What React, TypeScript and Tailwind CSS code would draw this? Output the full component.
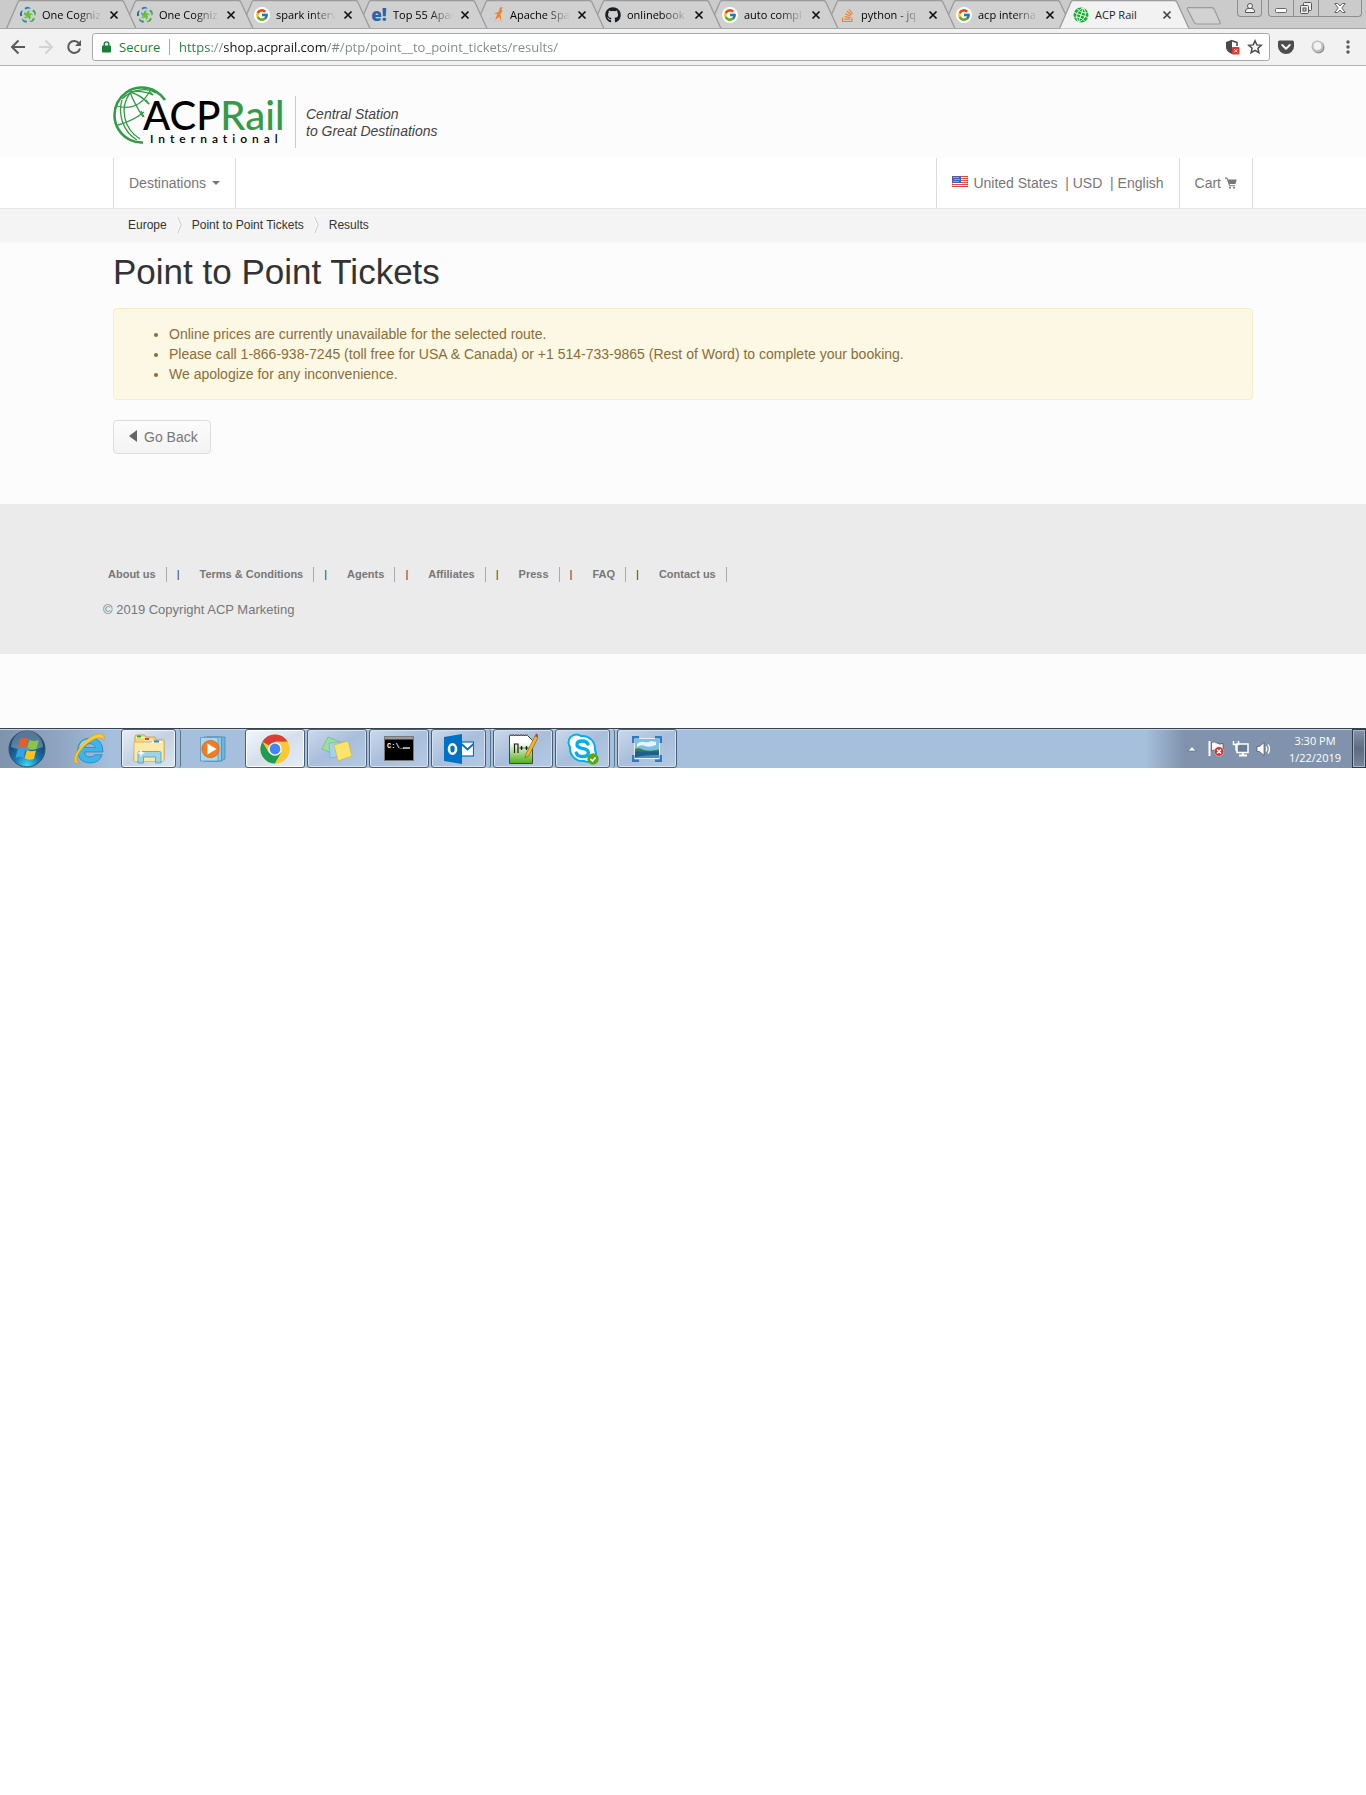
import type { ReactNode } from "react";
import { FcGoogle } from "react-icons/fc";
import { FaGithub, FaStackOverflow } from "react-icons/fa";

/* ---------- favicons ---------- */

function PinwheelIcon() {
  const arms = [
    { angle: 0, outer: "#1c86c4", inner: "#5bbf3f" },
    { angle: 72, outer: "#3aa655", inner: "#7ac943" },
    { angle: 144, outer: "#45b649", inner: "#5bbf3f" },
    { angle: 216, outer: "#2a9c8f", inner: "#7ac943" },
    { angle: 288, outer: "#1470a8", inner: "#5bbf3f" },
  ];
  return (
    <svg viewBox="0 0 18 18" className="size-[18px]" aria-hidden="true">
      <circle cx="9" cy="9" r="2.600" fill="#69c13f" />
      {arms.map((a) => (
        <g key={a.angle} transform={`rotate(${a.angle} 9 9)`}>
          <path d="M5.500 2Q9.500-.8 12 2.800 9 1.800 6.500 3.800Z" fill={a.outer} />
          <path d="M7.800 7.500Q7.400 4.600 11 4.300 9.600 5.600 10.200 8Z" fill={a.inner} />
        </g>
      ))}
    </svg>
  );
}

function GoogleIcon() {
  return (
    <span className="flex size-4 items-center justify-center rounded-full bg-white">
      <FcGoogle size={14} />
    </span>
  );
}

function EdurekaIcon() {
  return <span className="font-['Open_Sans',sans-serif] text-[17px] leading-6 font-extrabold text-[#2565ae]">e!</span>;
}

function SparkPersonIcon() {
  return (
    <svg viewBox="0 0 16 16" className="size-4" aria-hidden="true">
      <path d="M12 .5 14.500 0l-1 2.800 1 1.700-2 2.200 1 7.800-2.300-4.500L7 13l2.300-6L5.500 6.500 10.500 5Z" fill="#f58220" />
      <path d="M1 12c3-2 5 0 7-1M5 14.500c3-1.500 6 .5 9 0" stroke="#c8c4dd" fill="none" />
    </svg>
  );
}

function GreenGlobeIcon() {
  return (
    <svg viewBox="0 0 16 16" className="size-4" aria-hidden="true">
      <circle cx="8" cy="8" r="7.500" fill="#0fae2c" />
      <g transform="rotate(20 8 8)" stroke="#e8f8ea" strokeWidth=".9" fill="none">
        <path d="M8 .5v15M.5 8h15M2.500 3.500c3 2 8 2 11 0M2.500 12.500c3-2 8-2 11 0M8 .5c-5.500 4-5.500 11 0 15M8 .5c5.500 4 5.500 11 0 15" />
      </g>
    </svg>
  );
}

/* ---------- browser frame ---------- */

type Tab = { title: string; icon: ReactNode; active?: boolean };

const tabs: Tab[] = [
  { title: "One Cogniz", icon: <PinwheelIcon /> },
  { title: "One Cogniz", icon: <PinwheelIcon /> },
  { title: "spark interv", icon: <GoogleIcon /> },
  { title: "Top 55 Apac", icon: <EdurekaIcon /> },
  { title: "Apache Spa", icon: <SparkPersonIcon /> },
  { title: "onlinebook", icon: <FaGithub size={16} color="#1b1f23" /> },
  { title: "auto compl", icon: <GoogleIcon /> },
  { title: "python - jq", icon: <FaStackOverflow size={15} color="#f48024" /> },
  { title: "acp interna", icon: <GoogleIcon /> },
  { title: "ACP Rail", icon: <GreenGlobeIcon />, active: true },
];

function BrowserTab({ tab, index }: { tab: Tab; index: number }) {
  return (
    <div
      className="relative flex h-[29px] w-[117px] shrink-0 items-center pt-[1px] pl-[13px]"
      style={{ zIndex: tab.active ? 30 : 20 - index }}
    >
      <svg viewBox="0 0 132 29" className="absolute top-0 left-0 h-[29px] w-[132px]" aria-hidden="true">
        <path
          d="M.5 28.500 12 2Q12.500 .5 14 .5H115Q117 .5 117.800 2L130 28.500"
          fill={tab.active ? "#f2f2f2" : "#d0d0d0"}
          stroke="#9b9b9b"
          strokeWidth="1.300"
        />
        {!tab.active && <path d="M0 28.500H132" stroke="#a6a6a6" />}
      </svg>
      <span className="relative flex w-[18px] shrink-0 justify-center">{tab.icon}</span>
      <button
        role="tab"
        aria-selected={!!tab.active}
        className={
          tab.active
            ? "relative ml-[5px] w-[62px] overflow-hidden text-left text-[11px] leading-4 whitespace-nowrap text-[#222]"
            : "relative ml-[5px] w-[62px] overflow-hidden [mask-image:linear-gradient(to_right,#000_35px,transparent_60px)] text-left text-[11px] leading-4 whitespace-nowrap text-black"
        }
      >
        {tab.title}
      </button>
      <button aria-label={`Close ${tab.title}`} className="relative ml-[2px] flex size-4 shrink-0 items-center justify-center">
        <svg viewBox="0 0 10 10" className="size-[10px]" aria-hidden="true">
          <path d="m1.500 1.500 7 7m0-7-7 7" stroke={tab.active ? "#444" : "#111"} strokeWidth="1.700" />
        </svg>
      </button>
    </div>
  );
}

function WindowControls() {
  return (
    <div className="ml-auto flex gap-[6px] pr-[4px]">
      <button aria-label="Profile" className="flex h-[17px] w-[25px] items-center justify-center rounded-b-[4px] border border-t-0 border-[#8e8e8e]">
        <svg viewBox="0 0 12 12" className="size-3" fill="#f2f2f2" stroke="#555" aria-hidden="true">
          <path d="M1.500 10.500V9q0-2 2.500-2.500h4Q10.500 7 10.500 9v1.500Z" />
          <circle cx="6" cy="4" r="2.500" />
        </svg>
      </button>
      <div className="flex h-[17px] rounded-b-[4px] border border-t-0 border-[#8e8e8e]">
        <button aria-label="Minimize" className="flex w-[25px] items-center justify-center border-r border-[#8e8e8e]">
          <svg viewBox="0 0 12 12" className="size-3" aria-hidden="true">
            <rect x=".5" y="6.500" width="11" height="4" rx="1" fill="#fff" stroke="#666" />
          </svg>
        </button>
        <button aria-label="Restore" className="flex w-[25px] items-center justify-center border-r border-[#8e8e8e]">
          <svg viewBox="0 0 14 14" className="size-[14px]" fill="#eee" stroke="#555" aria-hidden="true">
            <rect x="4.500" y="1.500" width="8" height="8" rx="1" />
            <rect x="1.500" y="4.500" width="8" height="8" rx="1" />
            <rect x="4" y="7" width="3" height="3" fill="#ccc" />
          </svg>
        </button>
        <button aria-label="Close window" className="flex w-[42px] items-center justify-center">
          <svg viewBox="0 0 12 12" className="size-3" aria-hidden="true">
            <path d="M.8 1.500h3L6 4l2.200-2.500h3L7.800 6l3.400 4.500h-3L6 8l-2.200 2.500h-3L4.200 6Z" fill="#fff" stroke="#666" />
          </svg>
        </button>
      </div>
    </div>
  );
}

function Toolbar() {
  return (
    <div className="flex h-[37px] items-center border-b border-[#b5b5b5] bg-[#f2f2f2] pr-[10px] pl-[10px]">
      <button aria-label="Back" className="flex size-4 items-center justify-center">
        <svg viewBox="0 0 16 16" className="size-4" fill="none" stroke="#5a5a5a" strokeWidth="2" aria-hidden="true">
          <path d="M15 8H2.500M8.500 1.500 2 8l6.500 6.500" />
        </svg>
      </button>
      <button aria-label="Forward" className="ml-[12px] flex size-4 items-center justify-center">
        <svg viewBox="0 0 16 16" className="size-4" fill="none" stroke="#d3d3d3" strokeWidth="2" aria-hidden="true">
          <path d="M1 8h12.500M7.500 1.500 14 8l-6.500 6.500" />
        </svg>
      </button>
      <button aria-label="Reload" className="ml-[12px] flex size-4 items-center justify-center">
        <svg viewBox="0 0 16 16" className="size-4" fill="none" stroke="#5a5a5a" strokeWidth="2" aria-hidden="true">
          <path d="M13 4.300A6 6 0 1 0 14 9.500" />
          <path d="M15 1v6H9Z" fill="#5a5a5a" stroke="none" />
        </svg>
      </button>
      <div className="ml-[10px] flex h-[28px] min-w-0 flex-1 items-center rounded-[3px] border border-[#a9a9a9] bg-white pr-[6px] pl-[9px]">
        <svg viewBox="0 0 9 12" className="h-3 w-[9px]" aria-hidden="true">
          <rect y="4.500" width="9" height="7" rx=".8" fill="#188038" />
          <path d="M2.200 5V3.200a2.300 2.300 0 0 1 4.600 0V5" fill="none" stroke="#188038" strokeWidth="1.400" />
        </svg>
        <span className="w-[58px] pl-[8px] text-[13px] leading-5 text-[#188038]">Secure</span>
        <span className="mr-[9px] h-4 w-px bg-[#a9a9a9]" />
        <input
          aria-label="Address"
          defaultValue="https://shop.acprail.com/#/ptp/point__to_point_tickets/results/"
          className="min-w-0 flex-1 bg-[linear-gradient(to_right,#188038_0_32px,#80868b_32px_45px,#111_45px_148px,#80868b_148px)] bg-clip-text text-[13px] leading-5 text-transparent outline-none"
        />
        <button aria-label="Blocked content" className="flex size-4 items-center justify-center">
          <svg viewBox="0 0 16 16" className="size-4" aria-hidden="true">
            <path d="M8 .8 2 3v5c0 3.500 3 6 6 7Z" fill="#4a4a4a" />
            <path d="M8 1.800 13 3.600V7" fill="none" stroke="#4a4a4a" strokeWidth="1.600" />
            <rect x="8" y="8" width="7.500" height="7.500" rx="1" fill="#d93a2f" />
            <path d="m10.300 10.300 3 3m0-3-3 3" stroke="#fff" />
          </svg>
        </button>
        <button aria-label="Bookmark" className="ml-[7px] flex size-4 items-center justify-center">
          <svg viewBox="0 0 16 16" className="size-4" fill="none" stroke="#4a4a4a" strokeWidth="1.500" aria-hidden="true">
            <path d="m8 1.800 1.800 4.100 4.500.4-3.400 3 1 4.400L8 11.400l-3.900 2.300 1-4.400-3.400-3 4.500-.4Z" />
          </svg>
        </button>
      </div>
      <button aria-label="Save to Pocket" className="ml-[8px] flex size-4 items-center justify-center">
        <svg viewBox="0 0 16 16" className="size-4" aria-hidden="true">
          <path d="M1.500 1.500h13Q16 1.500 16 3v4.500a8 7.500 0 0 1-16 0V3Q0 1.500 1.500 1.500Z" fill="#4d4d4d" />
          <path d="m4.200 6 3.800 3.700L11.800 6" fill="none" stroke="#f4f4f4" strokeWidth="2" strokeLinecap="round" strokeLinejoin="round" />
        </svg>
      </button>
      <button aria-label="Extension" className="ml-[16px] flex size-4 items-center justify-center">
        <svg viewBox="0 0 16 16" className="size-4" aria-hidden="true">
          <circle cx="8.500" cy="8.500" r="6" fill="#8e8e8e" />
          <circle cx="7.500" cy="7.500" r="6" fill="#bdbdbd" />
          <circle cx="7.500" cy="7" r="4" fill="#f3f3f3" />
        </svg>
      </button>
      <button aria-label="Menu" className="ml-[14px] flex size-4 items-center justify-center">
        <svg viewBox="0 0 16 16" className="size-4" fill="#5a5a5a" aria-hidden="true">
          <circle cx="8" cy="3" r="1.700" />
          <circle cx="8" cy="8" r="1.700" />
          <circle cx="8" cy="13" r="1.700" />
        </svg>
      </button>
    </div>
  );
}

function BrowserFrame() {
  return (
    <div className="font-['Open_Sans','Noto_Sans',sans-serif]">
      <div className="flex h-[29px] items-start border-b border-[#a6a6a6] bg-[#cbcbcb] pl-[6px]">
        <div role="tablist" className="flex">
          {tabs.map((tab, i) => (
            <BrowserTab key={i} tab={tab} index={i} />
          ))}
        </div>
        <button aria-label="New tab" className="mt-[7px] ml-[10px]">
          <svg viewBox="0 0 36 18" className="h-[18px] w-9" aria-hidden="true">
            <path d="M2.500 .7h23q2 0 3 2l5.500 12.500q.7 1.800-1 1.800H11q-2 0-3-2L1.500 2.500Q.8 .7 2.500 .7Z" fill="#d2d2d2" stroke="#9b9b9b" strokeWidth="1.200" />
          </svg>
        </button>
        <WindowControls />
      </div>
      <Toolbar />
    </div>
  );
}

/* ---------- site ---------- */

function Logo() {
  return (
    <svg viewBox="0 0 172 60" className="h-[60px] w-[172px] overflow-visible" role="img" aria-label="ACPRail International">
      <g fill="none" stroke="#349b47">
        <path d="M52 14A27.500 27.500 0 1 0 30 56.500" strokeWidth="2.600" />
        <g strokeWidth="1.300">
          <path d="M9 13Q16 6 25 4.500Q35 2 43 7" />
          <path d="M9 14C5 27 9 45 24 54" />
          <path d="M17 7C6 22 11 43 27 53" />
          <path d="M17 6Q21 17 30 31" />
          <path d="M17 6Q28 9 36 18" />
          <path d="M17 6Q30 4 40 9" />
          <path d="M4 20Q25 26 37 5" />
          <path d="M5 39Q20 35 31 26" />
          <path d="M28 25l3 6M33 14l3 4M37 6l3 3" />
        </g>
      </g>
      <text x="30" y="44" className="font-['Lato',sans-serif] text-[40px] font-medium" fill="#000">
        ACP<tspan fill="#349b47">Rail</tspan>
      </text>
      <text x="37" y="57" className="font-['Lato',sans-serif] text-[12px] font-semibold tracking-[5px]" fill="#000">
        International
      </text>
    </svg>
  );
}

function FlagIcon() {
  return (
    <svg viewBox="0 0 16 11" className="mb-1 h-[11px] w-4" aria-hidden="true">
      <rect width="16" height="11" fill="#fff" />
      <path d="M0 .5h16M0 2.500h16M0 4.500h16M0 6.500h16M0 8.500h16M0 10.500h16" stroke="#ee4a3c" />
      <rect width="9" height="7" fill="#2f62d0" />
      <path d="M1.500 1.500h6M2.500 3.500h6M1.500 5.500h6" stroke="#dfe7fa" strokeDasharray="1 1" />
      <rect x=".5" y=".5" width="15" height="10" fill="none" stroke="#b0453f" strokeOpacity=".4" />
    </svg>
  );
}

function CartIcon() {
  return (
    <svg viewBox="0 0 12 12" className="size-3" fill="#777" aria-hidden="true">
      <path d="M0 .5h2.300L3 2.500h8.700L10.500 7H4.500l.4 1.300H10v1H4.200L1.700 1.700H0Z" />
      <circle cx="5" cy="10.700" r="1" />
      <circle cx="9" cy="10.700" r="1" />
    </svg>
  );
}

function SiteHeader() {
  return (
    <header>
      <div className="mx-auto flex h-[92px] max-w-[1140px] pt-[20px]">
        <a href="#home" className="block">
          <Logo />
        </a>
        <p className="mt-[10px] ml-[10px] h-[52px] border-l border-[#ccc] pt-[10px] pl-[10px] text-[14px] leading-[17px] text-[#444] italic">
          Central Station
          <br />
          to Great Destinations
        </p>
      </div>
      <nav aria-label="Main" className="border-b border-[#e5e5e5] bg-white text-[14px] leading-5 text-[#777]">
        <div className="mx-auto flex h-[50px] max-w-[1140px] justify-between">
          <button className="flex items-center border-x border-[#ddd] px-[15px]">
            Destinations
            <span className="ml-[6px] border-x-4 border-t-4 border-x-transparent border-t-[#777]" />
          </button>
          <div className="flex">
            <button className="flex items-center border-l border-[#ddd] px-[15px] whitespace-pre">
              <FlagIcon />
              <span className="ml-[5px]">{"United States\u00a0 | USD\u00a0 | English"}</span>
            </button>
            <a href="#cart" className="flex items-center gap-[4px] border-x border-[#ddd] px-[15px]">
              Cart
              <CartIcon />
            </a>
          </div>
        </div>
      </nav>
    </header>
  );
}

function Breadcrumb() {
  const crumbs = ["Europe", "Point to Point Tickets", "Results"];
  return (
    <nav aria-label="Breadcrumb" className="bg-[#f4f4f4]">
      <ol className="mx-auto flex h-[33px] max-w-[1140px] items-center pb-[2px] pl-[15px] text-[12px] leading-5 text-[#333]">
        {crumbs.map((c, i) => (
          <li key={c} className="flex items-center">
            <a href={`#crumb-${i}`}>{c}</a>
            {i < crumbs.length - 1 && (
              <svg viewBox="0 0 6 18" className="mr-[10px] ml-[9px] h-[18px] w-[6px]" fill="none" aria-hidden="true">
                <path d="M1.500 1 5 9 1.500 17" stroke="#c4c4c4" />
                <path d="M.5 1 4 9 .5 17" stroke="#fff" />
              </svg>
            )}
          </li>
        ))}
      </ol>
    </nav>
  );
}

function Results() {
  return (
    <main className="mx-auto max-w-[1140px] pt-[10px] pb-[50px]">
      <h1 className="text-[35px] leading-10 text-[#333]">Point to Point Tickets</h1>
      <div role="alert" className="mt-4 rounded-[4px] border border-[#faebcc] bg-[#fcf8e3] p-[15px] text-[14px] leading-5 text-[#8a6d3b]">
        <ul className="list-disc pl-10">
          <li>Online prices are currently unavailable for the selected route.</li>
          <li>Please call 1-866-938-7245 (toll free for USA &amp; Canada) or +1 514-733-9865 (Rest of Word) to complete your booking.</li>
          <li>We apologize for any inconvenience.</li>
        </ul>
      </div>
      <button className="mt-5 flex items-center rounded-[4px] border border-[#ddd] bg-linear-to-b from-[#fcfcfc] to-[#f3f3f3] py-[6px] pr-[12px] pl-[15px] text-[14px] leading-5 text-[#777]">
        <svg viewBox="0 0 8 12" className="mr-[7px] mb-[2px] h-3 w-2" fill="#666" aria-hidden="true">
          <path d="M8 0v12L0 6Z" />
        </svg>
        Go Back
      </button>
    </main>
  );
}

const footerLinks = ["About us", "Terms & Conditions", "Agents", "Affiliates", "Press", "FAQ", "Contact us"];

function Footer() {
  return (
    <footer className="h-[150px] bg-[#ebebeb] pt-[63px] text-[#777]">
      <div className="mx-auto max-w-[1160px]">
        <ul className="flex items-center pl-[5px] text-[11px] leading-[15px] font-bold">
          {footerLinks.map((label, i) => (
            <li key={label} className="flex">
              <a href={`#footer-${i}`} className="border-r border-[#aaa] pr-[10px]">
                {label}
              </a>
              {i < footerLinks.length - 1 && <span className="mr-[20px] ml-[10px] font-normal text-[#333]">|</span>}
            </li>
          ))}
        </ul>
        <p className="mt-[18px] text-[13px] leading-5">© 2019 Copyright ACP Marketing</p>
      </div>
    </footer>
  );
}

/* ---------- taskbar ---------- */

function StartOrb() {
  return (
    <svg viewBox="0 0 38 38" className="size-[38px]" aria-hidden="true">
      <defs>
        <radialGradient id="orb" cx=".5" cy=".95" r=".8">
          <stop offset="0" stopColor="#3fd8f5" />
          <stop offset=".45" stopColor="#1673ab" />
          <stop offset="1" stopColor="#123c63" />
        </radialGradient>
      </defs>
      <circle cx="19" cy="19" r="18" fill="url(#orb)" stroke="#32506f" />
      <path d="M3 17A16 16 0 0 1 35 17Q19 24 3 17Z" fill="#b9d3e6" fillOpacity=".4" />
      <path d="M12 9.500q4-2.600 8-.6l-2 8.600q-4-2-8 .3Z" fill="#ef5b28" />
      <path d="M21.300 9.800q4 2.300 9.500.3l-2.300 8.600q-5.200 1.700-9.200-.6Z" fill="#8cc63e" />
      <path d="M9.500 19.700q4-2.300 8-.3L15.500 27.700q-4-2-8 .6Z" fill="#36a3e0" />
      <path d="M18.800 20q4 2.300 9.200.6l-2.100 8.300q-4.900 1.700-9.200-.3Z" fill="#fcc21b" />
    </svg>
  );
}

function ExplorerEIcon() {
  return (
    <svg viewBox="0 0 32 32" className="size-8" aria-hidden="true">
      <path
        d="M30 19H11.500q.5 5 5.500 5 3.500 0 4.800-2.300h7.400Q26.500 30 17 30 5 29.500 4.500 17.500 5 5.500 17.500 5 30 5.500 30 19ZM11.700 14.500H22.300Q21.500 10.600 17 10.500q-4.500.1-5.300 4Z"
        fill="#3cb6ea"
        stroke="#1b7fbd"
        strokeWidth=".7"
      />
      <path d="M7 14.500Q9 8 16.500 7" stroke="#b5e8fb" strokeWidth="1.800" fill="none" />
      <path d="M7 30.500Q-1.500 31.500 2.500 21.500 9 8 21 2 32.500-2 31 7.500 29 2.500 19.500 7 8 13.500 4.300 23.500 2 29 7 30.500Z" fill="#fbcb2f" stroke="#d79a10" strokeWidth=".6" />
    </svg>
  );
}

function FolderIcon() {
  return (
    <svg viewBox="0 0 34 32" className="h-8 w-[34px]" aria-hidden="true">
      <path d="M3 3.500q0-1.500 1.500-1.500h8l1.500 2h9l1.500 3h6q1.500 0 1.500 1.500V27H2Z" fill="#f5d77c" stroke="#c49a37" strokeWidth=".8" />
      <path d="M2 9h17l1.500-2h11.500v20q0 1.500-1.500 1.500h-27Q2 28.500 2 27Z" fill="#fae9a8" stroke="#d1ab4e" strokeWidth=".7" />
      <path d="M4 4.500h8M12 7h9M20 9.500h9" stroke="#fff" />
      <rect x="5" y="2.500" width="4" height="2" fill="#20b04a" />
      <rect x="13" y="5" width="4" height="2" fill="#d9452b" />
      <rect x="22" y="7.500" width="5" height="2" fill="#2b85d0" />
      <path d="M6 30V20q0-1.500 1.500-1.500h20q1.500 0 1.500 1.500v10h-5.500v-6h-12v6Z" fill="#8fd0ea" fillOpacity=".85" stroke="#4d9dc2" strokeWidth=".8" />
      <path d="m9 16 1 3 3 1-3 1-1 3-1-3-3-1 3-1Z" fill="#fff" />
    </svg>
  );
}

function MediaIcon() {
  return (
    <svg viewBox="0 0 28 28" className="size-7" aria-hidden="true">
      <path d="M8 2h18v22l-4 2H8Z" fill="#6bb7dc" stroke="#3f86ad" strokeWidth=".7" />
      <path d="M5 2h17.500v24H5Z" fill="#8ecbe8" stroke="#3f86ad" strokeWidth=".7" />
      <path d="M1.500 2.500H19v23.500H1.500Z" fill="#a8d8ef" stroke="#4a91b8" strokeWidth=".7" />
      <circle cx="11.500" cy="14" r="8.700" fill="#f47c20" stroke="#cc5a0c" strokeWidth=".6" />
      <path d="m8.500 8.500 9 5.500-9 5.500Z" fill="#fff" />
    </svg>
  );
}

function ChromeIcon() {
  return (
    <svg viewBox="0 0 30 30" className="size-[30px]" aria-hidden="true">
      <circle cx="15" cy="15" r="14.500" fill="#fcc934" />
      <path d="M15 15 2.440 7.750A14.500 14.500 0 0 1 27.560 7.750H15Z" fill="#d93f34" />
      <path d="M2.440 7.750A14.500 14.500 0 0 0 15 29.500L21.280 18.620 15 15 8.720 18.620Z" fill="#1e9c53" />
      <path d="M15 7.750H27.560A14.500 14.500 0 0 1 15 29.500L21.280 18.620Z" fill="#fcc934" />
      <circle cx="15" cy="15" r="6.800" fill="#fff" />
      <circle cx="15" cy="15" r="5.400" fill="#4285f4" />
    </svg>
  );
}

function StickyIcon() {
  return (
    <svg viewBox="0 0 32 28" className="h-7 w-8" strokeWidth=".6" aria-hidden="true">
      <path d="M7 2 19 7 13 19 1 14Z" fill="#9adf9b" stroke="#67b569" />
      <path d="m8 8 14-1 1 14-14 2Z" fill="#9fd2f3" stroke="#6ba7cf" />
      <path d="m13 10 14-4 4 15-14 5Z" fill="#fbe36c" stroke="#cfae31" />
    </svg>
  );
}

function TerminalIcon() {
  return (
    <svg viewBox="0 0 30 25" className="h-[25px] w-[30px]" aria-hidden="true">
      <rect x=".5" y=".5" width="29" height="24" fill="#000" stroke="#777" />
      <rect x="1" y="1" width="28" height="2.500" fill="#9a9a9a" />
      <text x="3" y="12" className="font-['Liberation_Mono',monospace] text-[7px] font-bold" fill="#fff">
        C:\_
      </text>
      <path d="M19 12h7" stroke="#fff" strokeWidth="1.300" />
    </svg>
  );
}

function OutlookIcon() {
  return (
    <svg viewBox="0 0 30 30" className="size-[30px]" aria-hidden="true">
      <rect x="17" y="8" width="12.500" height="14" fill="#fff" stroke="#0072c6" strokeWidth="1.200" />
      <path d="m17.500 10 6 5.500 6-5.500" fill="none" stroke="#0072c6" strokeWidth="1.800" />
      <path d="M0 3 18 0v30L0 27Z" fill="#0072c6" />
      <ellipse cx="8.500" cy="15" rx="3.500" ry="4.700" fill="none" stroke="#fff" strokeWidth="2.600" />
    </svg>
  );
}

function NotepadIcon() {
  return (
    <svg viewBox="0 0 30 32" className="h-8 w-[30px]" aria-hidden="true">
      <defs>
        <linearGradient id="note" x2="0" y2="1">
          <stop offset=".25" stopColor="#fff" />
          <stop offset="1" stopColor="#4fae11" />
        </linearGradient>
      </defs>
      <path d="M1.500 2.500h18l5 5v23h-23Z" fill="url(#note)" stroke="#3d4d33" />
      <path d="M2 2h18" stroke="#777" strokeWidth="2" strokeDasharray="1.500 1" />
      <path d="M6.500 20v-9h3.500v9M11.500 15h4M13.500 13v4M16.500 15h4M18.500 13v4" fill="none" stroke="#1c1c1c" strokeWidth="1.200" />
      <path d="m17 25 1-4L27 3l3 1.500L21 22.500Z" fill="#f3b62f" stroke="#8f6012" strokeWidth=".7" />
      <path d="m27 3 1-2.500 2 1v3Z" fill="#b64653" />
    </svg>
  );
}

function SkypeIcon() {
  return (
    <svg viewBox="0 0 32 32" className="size-8" aria-hidden="true">
      <circle cx="9.500" cy="9.500" r="9" fill="#00aff0" />
      <circle cx="21" cy="21" r="9" fill="#00aff0" />
      <circle cx="15.500" cy="15.500" r="13.500" fill="#00aff0" />
      <circle cx="9.500" cy="9.500" r="7" fill="#fff" />
      <circle cx="21" cy="21" r="7" fill="#fff" />
      <circle cx="15.500" cy="15.500" r="11.500" fill="#fff" />
      <path d="M21 11q-1.500-3-5.500-3-5.500 0-5.500 3.500 0 3 5.300 3.900 6 .8 6 4.300 0 3.800-6 3.800-4.700 0-6-3.500" fill="none" stroke="#00aff0" strokeWidth="3.400" strokeLinecap="round" />
      <circle cx="26" cy="26" r="5.700" fill="#5aa812" />
      <path d="m23.500 26 2 2 3-3.500" fill="none" stroke="#fff" strokeWidth="1.700" />
    </svg>
  );
}

function PhotoIcon() {
  return (
    <svg viewBox="0 0 30 26" className="h-[26px] w-[30px]" aria-hidden="true">
      <rect x="2.500" y="2.500" width="25" height="20" fill="#7cc0ea" stroke="#e8eef2" />
      <path d="M5 8q3-3 7-2t7-1l5 1v3q-7 3-11 1T5 11Z" fill="#e7f6fd" />
      <path d="M3 13q4-2 9 1 7 1.500 15-.5v3H3Z" fill="#3d7f47" />
      <path d="M3 15.500h24V22H3Z" fill="#1f5f8b" />
      <path d="M3 21.500q8-3 24-2.500v3H3Z" fill="#4d8fb5" />
      <path d="M1.200 7V1.200H7M23 1.200h5.800V7M28.800 19v5.800H23M7 24.800H1.200V19" fill="none" stroke="#2b7cc0" strokeWidth="2.400" />
    </svg>
  );
}

type Task = { name: string; icon: ReactNode; state: "idle" | "open" | "stack" | "focus" };

const tasks: Task[] = [
  { name: "Internet Explorer", icon: <ExplorerEIcon />, state: "idle" },
  { name: "File Explorer", icon: <FolderIcon />, state: "stack" },
  { name: "Media Player", icon: <MediaIcon />, state: "idle" },
  { name: "Chrome", icon: <ChromeIcon />, state: "focus" },
  { name: "Sticky Notes", icon: <StickyIcon />, state: "open" },
  { name: "Command Prompt", icon: <TerminalIcon />, state: "open" },
  { name: "Outlook", icon: <OutlookIcon />, state: "stack" },
  { name: "Notepad++", icon: <NotepadIcon />, state: "open" },
  { name: "Skype", icon: <SkypeIcon />, state: "stack" },
  { name: "Photo Viewer", icon: <PhotoIcon />, state: "open" },
];

function TaskButton({ task }: { task: Task }) {
  if (task.state === "idle") {
    return (
      <button aria-label={task.name} className="flex h-[39px] w-[60px] items-center justify-center">
        {task.icon}
      </button>
    );
  }
  if (task.state === "stack") {
    const first = task.name === "File Explorer";
    return (
      <div className="flex h-[39px] w-[60px] rounded-[3px] border-r border-[#5f7690]">
        <button
          aria-label={task.name}
          className={
            first
              ? "flex w-[55px] items-center justify-center rounded-[3px] border border-[#4b5e75] bg-linear-to-br from-[#e8eef6] via-[#c3d1e4] to-[#dbe6f2] shadow-[inset_0_0_0_1px_#eef4fa]"
              : "flex w-[55px] items-center justify-center rounded-[3px] border border-[#4b5e75] bg-linear-to-br from-[#cbd9ea] via-[#a8bedb] to-[#b5cae3] shadow-[inset_0_0_0_1px_#d5e2f0]"
          }
        >
          {task.icon}
        </button>
      </div>
    );
  }
  return (
    <button
      aria-label={task.name}
      className={
        task.state === "focus"
          ? "flex h-[39px] w-[60px] items-center justify-center rounded-[3px] border border-[#4b5e75] bg-linear-to-br from-[#f4f7fb] via-[#d5dfec] to-[#e6edf5] shadow-[inset_0_0_0_1px_#ffffff]"
          : "flex h-[39px] w-[60px] items-center justify-center rounded-[3px] border border-[#4b5e75] bg-linear-to-br from-[#cbd9ea] via-[#a8bedb] to-[#b5cae3] shadow-[inset_0_0_0_1px_#d5e2f0]"
      }
    >
      {task.icon}
    </button>
  );
}

function Tray() {
  return (
    <div className="ml-auto flex h-full items-center text-white">
      <button aria-label="Show hidden icons" className="flex size-4 items-center justify-center">
        <svg viewBox="0 0 10 6" className="h-[6px] w-[10px]" aria-hidden="true">
          <path d="m5 .5 4 4.500H1Z" fill="#fff" stroke="#54657b" strokeWidth=".6" />
        </svg>
      </button>
      <button aria-label="Action Center" className="ml-[8px]">
        <svg viewBox="0 0 16 17" className="h-[17px] w-4" aria-hidden="true">
          <path d="M1.500 1v15" stroke="#fff" strokeWidth="2" />
          <path d="M3.500 2.500q3-1.500 5.500.5t6 .5v8q-3 1.500-6-.5t-5.500 0Z" fill="#f6f8fa" stroke="#3f4f63" strokeWidth=".7" />
          <circle cx="11" cy="11.500" r="4.700" fill="#d9302a" stroke="#f8d0cd" strokeWidth=".5" />
          <path d="m9 9.500 4 4m0-4-4 4" stroke="#fff" strokeWidth="1.600" />
        </svg>
      </button>
      <button aria-label="Network" className="ml-[8px]">
        <svg viewBox="0 0 17 17" className="size-[17px]" aria-hidden="true">
          <rect x="5" y="4" width="11" height="8.500" fill="#687c95" stroke="#fff" strokeWidth="1.500" />
          <path d="M7 15.500h8M11 12.500v3" stroke="#fff" strokeWidth="1.800" />
          <path d="M1.500 1v3.500h5V1M4 4.500V9q0 2 1.500 2" stroke="#fff" strokeWidth="1.500" fill="none" />
        </svg>
      </button>
      <button aria-label="Volume" className="ml-[7px]">
        <svg viewBox="0 0 16 16" className="size-4" aria-hidden="true">
          <path d="M1 5.500h2.500L8 1.500v13l-4.500-4H1Z" fill="#fff" stroke="#3f4f63" strokeWidth=".7" />
          <path d="M10 5.500q1.500 2.500 0 5M12 3.500q3 4.500 0 9" fill="none" stroke="#fff" strokeWidth="1.300" />
        </svg>
      </button>
      <button className="ml-[8px] w-[70px] text-center text-[11px] leading-[17px]">
        3:30 PM
        <br />
        1/22/2019
      </button>
      <button aria-label="Show desktop" className="ml-[2px] h-full w-[14px] border border-[#2f3c4b] bg-linear-to-b from-[#8494a8] via-[#5d6c80] to-[#76869b] shadow-[inset_0_0_0_1px_#a6b5c7]" />
    </div>
  );
}

function Taskbar() {
  return (
    <footer
      aria-label="Taskbar"
      className="flex h-10 items-center border-t border-[#36424f] bg-[linear-gradient(to_right,#7f93ad_0,#8fa5c1_60px,#a5bfdc_110px,#a5bfdc_calc(100%-220px),#8193ac_calc(100%-182px))] pl-[8px] font-['Open_Sans','Noto_Sans',sans-serif] shadow-[inset_0_1px_0_#c3d5e8]"
    >
      <button aria-label="Start" className="mr-[13px]">
        <StartOrb />
      </button>
      <div className="flex gap-[2px]">
        {tasks.map((t) => (
          <TaskButton key={t.name} task={t} />
        ))}
      </div>
      <Tray />
    </footer>
  );
}

export default function App() {
  return (
    <div className="min-h-screen bg-white">
      <BrowserFrame />
      <div className="bg-[#fcfcfc] pb-[74px] font-['Liberation_Sans',Arial,sans-serif]">
        <SiteHeader />
        <Breadcrumb />
        <Results />
        <Footer />
      </div>
      <Taskbar />
    </div>
  );
}
